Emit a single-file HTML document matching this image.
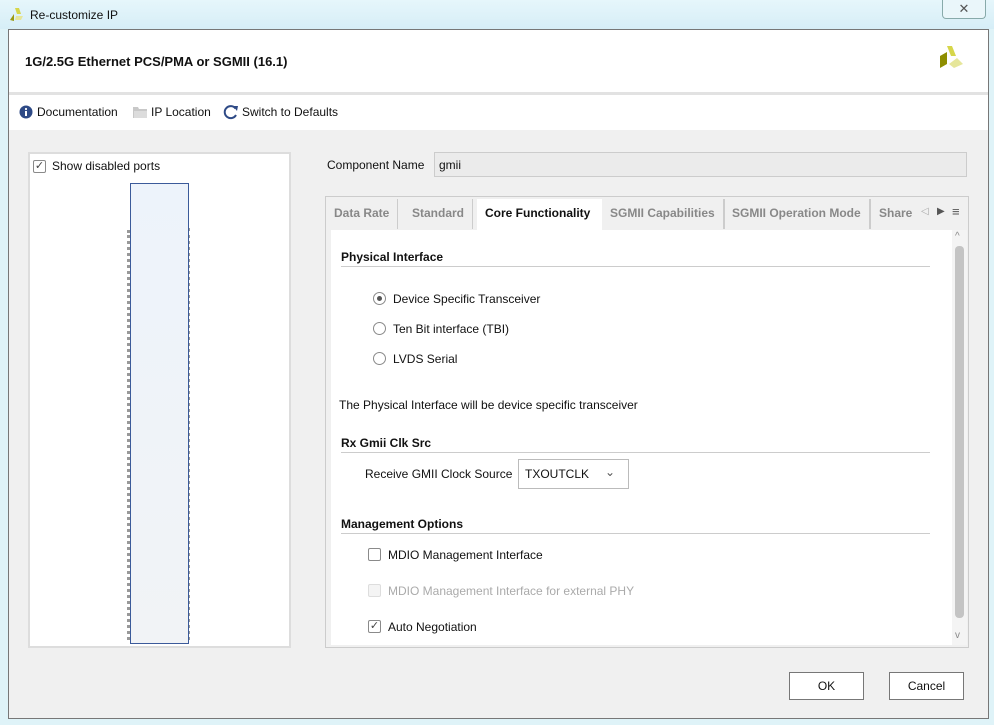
<!DOCTYPE html>
<html><head><style>
*{box-sizing:border-box;margin:0;padding:0}
body{width:994px;height:725px;position:relative;overflow:hidden;background:#dff3f8;font-family:"Liberation Sans",Arial,sans-serif;font-size:12px;color:#111}
.a{position:absolute}
.lbl{position:absolute;font-size:12px;white-space:nowrap}
.b{font-weight:bold}
.cb{position:absolute;width:13px;height:13px;border:1px solid #8a8a8a;background:#fff;border-radius:2px}
.rd{position:absolute;width:13px;height:13px;border:1px solid #8a8a8a;border-radius:50%;background:#fff}
.tab{position:absolute;top:199px;height:30px;line-height:29px;color:#888;font-weight:bold;font-size:12px;border-right:1px solid #ccc;padding:0 8px}
</style></head><body>
<div class="a" style="left:0;top:0;width:994px;height:29px;background:linear-gradient(#e6f6fb,#d6eef7)"></div>
<svg class="a" style="left:8px;top:6px" width="18" height="16"><polygon points="2,14 6,8 6,15" fill="#9a9a10"/><polygon points="7,2 11,2 13,8 9,8" fill="#d6d64a"/><polygon points="8,10 15,10 13,14 7,14" fill="#e6e69a"/></svg>
<div class="lbl" style="left:30px;top:8px;font-size:12px">Re-customize IP</div>
<div class="a" style="left:942px;top:0;width:44px;height:19px;border:1px solid #8aa;border-top:none;border-radius:0 0 4px 4px;background:#eaf6fa;text-align:center;font-size:13px;color:#555;line-height:18px">✕</div>
<div class="a" style="left:8px;top:29px;width:981px;height:690px;background:#f0f0f0;border:1px solid #777"></div>
<div class="a" style="left:9px;top:30px;width:979px;height:62px;background:#fff"></div>
<div class="lbl b" style="left:25px;top:54px;font-size:13px">1G/2.5G Ethernet PCS/PMA or SGMII (16.1)</div>
<svg class="a" style="left:938px;top:44px" width="34" height="34"><polygon points="9,2 14,2 18,12 13,12" fill="#d6d64a"/><polygon points="2,12 9,8 9,20 2,24" fill="#8e8e00"/><polygon points="11,20 19,14 25,20 16,24" fill="#e6e69a"/></svg>
<div class="a" style="left:9px;top:92px;width:979px;height:3px;background:#e2e2e2"></div>
<div class="a" style="left:9px;top:95px;width:979px;height:35px;background:#fff"></div>
<svg class="a" style="left:19px;top:105px" width="14" height="14"><circle cx="7" cy="7" r="6.5" fill="#2e4a86"/><rect x="6" y="6" width="2" height="5" fill="#fff"/><circle cx="7" cy="4" r="1.1" fill="#fff"/></svg>
<div class="lbl" style="left:37px;top:105px">Documentation</div>
<svg class="a" style="left:133px;top:106px" width="15" height="12"><path d="M0 1h5l1 2h8v9H0z" fill="#c8c8c8"/><path d="M1 5h13v7H1z" fill="#dcdcdc"/></svg>
<div class="lbl" style="left:151px;top:105px">IP Location</div>
<svg class="a" style="left:223px;top:104px" width="16" height="16"><path d="M12.5 4.5A6 6 0 1 0 13 11" fill="none" stroke="#2e4a86" stroke-width="2"/><polygon points="10,2 15,2 14,7" fill="#2e4a86"/></svg>
<div class="lbl" style="left:242px;top:105px">Switch to Defaults</div>
<!-- left panel -->
<div class="a" style="left:28px;top:152px;width:263px;height:496px;border:2px solid #ddd;background:#fff"></div>
<div class="cb" style="left:33px;top:160px;font-size:11px;line-height:11px;text-align:center;color:#444">✓</div>
<div class="lbl" style="left:52px;top:159px">Show disabled ports</div>
<div class="a" style="left:127px;top:230px;width:4px;height:410px;border-left:3px dotted #999"></div>
<div class="a" style="left:187px;top:228px;width:4px;height:412px;border-left:3px dotted #999"></div>
<div class="a" style="left:130px;top:183px;width:59px;height:461px;border:1px solid #3b5a9a;background:linear-gradient(#edf3fb,#f1f3f6)"></div>
<!-- component name -->
<div class="lbl" style="left:327px;top:158px">Component Name</div>
<div class="a" style="left:434px;top:152px;width:533px;height:25px;border:1px solid #ccc;background:#ebebeb;padding:5px 4px">gmii</div>
<!-- tab panel -->
<div class="a" style="left:325px;top:196px;width:644px;height:452px;border:1px solid #ccc;background:#f0f0f0"></div>
<div class="tab" style="left:326px">Data Rate</div>
<div class="tab" style="left:404px">Standard</div>
<div class="a" style="left:477px;top:199px;width:125px;height:31px;background:#fff;line-height:29px;padding-left:8px;font-weight:bold;color:#111">Core Functionality</div>
<div class="tab" style="left:602px;border-right:2px solid #ccc">SGMII Capabilities</div>
<div class="tab" style="left:724px;border-right:2px solid #ccc">SGMII Operation Mode</div>
<div class="tab" style="left:871px;border:none">Share</div>
<div class="lbl" style="left:921px;top:206px;color:#aaa;font-size:10px">◁</div>
<div class="lbl" style="left:937px;top:206px;color:#555;font-size:10px">▶</div>
<div class="lbl" style="left:952px;top:204px;color:#555;font-size:13px">≡</div>
<div class="a" style="left:331px;top:230px;width:636px;height:415px;background:#fff"></div>
<div class="a" style="left:952px;top:230px;width:15px;height:415px;background:#f4f4f4"></div>
<div class="lbl" style="left:955px;top:231px;color:#888;font-size:10px">^</div>
<div class="a" style="left:955px;top:246px;width:9px;height:372px;background:#c4c4c4;border-radius:4px"></div>
<div class="lbl" style="left:955px;top:630px;color:#888;font-size:10px">v</div>
<div class="lbl b" style="left:341px;top:250px">Physical Interface</div>
<div class="a" style="left:341px;top:266px;width:589px;height:1px;background:#ccc"></div>
<div class="rd" style="left:373px;top:292px"><div class="a" style="left:3px;top:3px;width:5px;height:5px;border-radius:50%;background:#555"></div></div>
<div class="lbl" style="left:393px;top:292px">Device Specific Transceiver</div>
<div class="rd" style="left:373px;top:322px"></div>
<div class="lbl" style="left:393px;top:322px">Ten Bit interface (TBI)</div>
<div class="rd" style="left:373px;top:352px"></div>
<div class="lbl" style="left:393px;top:352px">LVDS Serial</div>
<div class="lbl" style="left:339px;top:398px">The Physical Interface will be device specific transceiver</div>
<div class="lbl b" style="left:341px;top:436px">Rx Gmii Clk Src</div>
<div class="a" style="left:341px;top:452px;width:589px;height:1px;background:#ccc"></div>
<div class="lbl" style="left:365px;top:467px">Receive GMII Clock Source</div>
<div class="a" style="left:518px;top:459px;width:111px;height:30px;border:1px solid #bbb;background:#fff;padding:7px 6px">TXOUTCLK<span style="position:absolute;left:86px;top:5px;color:#555;font-size:12px">⌄</span></div>
<div class="lbl b" style="left:341px;top:517px">Management Options</div>
<div class="a" style="left:341px;top:533px;width:589px;height:1px;background:#ccc"></div>
<div class="cb" style="left:368px;top:548px"></div>
<div class="lbl" style="left:388px;top:548px">MDIO Management Interface</div>
<div class="cb" style="left:368px;top:584px;border-color:#ddd;background:#f4f4f4"></div>
<div class="lbl" style="left:388px;top:584px;color:#aaa">MDIO Management Interface for external PHY</div>
<div class="cb" style="left:368px;top:620px;font-size:11px;line-height:11px;text-align:center;color:#444">✓</div>
<div class="lbl" style="left:388px;top:620px">Auto Negotiation</div>
<div class="a" style="left:789px;top:672px;width:75px;height:28px;border:1px solid #777;background:#fff;text-align:center;line-height:26px">OK</div>
<div class="a" style="left:889px;top:672px;width:75px;height:28px;border:1px solid #777;background:#fff;text-align:center;line-height:26px">Cancel</div>
</body></html>
